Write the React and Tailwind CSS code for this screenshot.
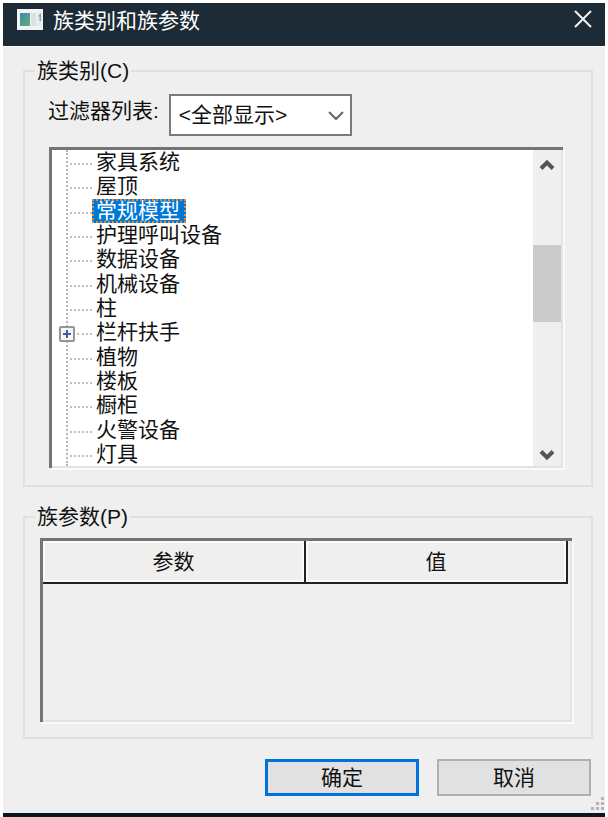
import React, { useState } from "react";

import clsx from "clsx";

const categories = [
  { label: "家具系统" },
  { label: "屋顶" },
  { label: "常规模型" },
  { label: "护理呼叫设备" },
  { label: "数据设备" },
  { label: "机械设备" },
  { label: "柱" },
  { label: "栏杆扶手", expandable: true },
  { label: "植物" },
  { label: "楼板" },
  { label: "橱柜" },
  { label: "火警设备" },
  { label: "灯具" },
];

function TitleBar() {
  return (
    <header className="flex h-11 items-start justify-between border-b border-white bg-[#1c2b36] pl-3 pr-1.5 text-white">
      <div className="flex items-center gap-2.5 pt-0.5">
        <svg width="28" height="26" viewBox="0 0 28 26" aria-hidden="true">
          <defs>
            <linearGradient id="pane" x1="0" y1="0" x2="1" y2="1">
              <stop offset="0" stopColor="#4a86ad" />
              <stop offset="1" stopColor="#5fb074" />
            </linearGradient>
          </defs>
          <rect x="2" y="1" width="26" height="21" fill="#f1f2f2" />
          <rect x="5" y="5" width="10" height="13" fill="url(#pane)" />
          <rect x="16" y="5" width="5" height="13" fill="#dcdfe2" />
          <rect x="22" y="5" width="4" height="13" fill="#e4ebee" />
          <path d="M22.5 9L26 5v8h-1.500V8z" fill="#6aa6b8" />
        </svg>
        <h1 className="text-[21px] leading-8">族类别和族参数</h1>
      </div>
      <button aria-label="关闭" className="p-1.5">
        <svg width="20" height="20" viewBox="0 0 20 20" aria-hidden="true">
          <path d="M2 2L18 18M18 2L2 18" stroke="#f1f1f1" strokeWidth="2" />
        </svg>
      </button>
    </header>
  );
}

function Group({ title, className, children }) {
  return (
    <fieldset className={clsx("min-w-0 border-2 border-[#e0e0e0]", className)}>
      <legend className="ml-2.5 px-0.5 leading-7">{title}</legend>
      {children}
    </fieldset>
  );
}

function CategoryRow({ label, expandable, selected, onSelect }) {
  return (
    <li className="flex flex-1 items-center">
      {/* connector column */}
      <div className="flex w-10 shrink-0 items-center self-stretch pt-1">
        {expandable ? (
          <button aria-label="展开" className="relative ml-[7px]">
            <svg width="16" height="16" viewBox="0 0 16 16" aria-hidden="true">
              <rect
                x="1"
                y="1"
                width="14"
                height="14"
                rx="1"
                fill="#f6f6f6"
                stroke="#969696"
                strokeWidth="2"
              />
              <path d="M8 4v8M4 8h8" stroke="#4059a8" strokeWidth="2" />
            </svg>
          </button>
        ) : (
          <span className="w-4" />
        )}
        <span className="ml-0.5 flex-1 border-t-2 border-dotted border-[#c0c0c0]" />
      </div>
      <button
        onClick={onSelect}
        className={clsx(
          "pr-1.5 pl-1 leading-6 outline-offset-[-2px]",
          selected && "bg-[#0078d7] text-white outline-2 outline-dotted outline-[#e08a3c]"
        )}
      >
        {label}
      </button>
    </li>
  );
}

function ScrollBar() {
  return (
    <div className="flex w-7 shrink-0 flex-col items-center bg-[#efefef] pt-2 pb-1">
      <button aria-label="向上滚动">
        <svg width="16" height="13" viewBox="0 0 16 13" aria-hidden="true">
          <path d="M2 10.5L8 4.5L14 10.5" fill="none" stroke="#555" strokeWidth="4" />
        </svg>
      </button>
      <div className="flex w-full flex-1 flex-col">
        <div className="grow-[74]" />
        <div className="h-[77px] bg-[#cbcbcb]" />
        <div className="grow-[127]" />
      </div>
      <button aria-label="向下滚动">
        <svg width="16" height="13" viewBox="0 0 16 13" aria-hidden="true">
          <path d="M2 2.5L8 8.5L14 2.5" fill="none" stroke="#555" strokeWidth="4" />
        </svg>
      </button>
    </div>
  );
}

function CategoryTree() {
  const [selected, setSelected] = useState("常规模型");

  return (
    <div className="mt-[11px] ml-6 mr-7 border-t-[3px] border-l-[3px] border-[#747474] bg-white shadow-[2px_2px_0_#fafafa]">
      <div className="flex h-[318px] border-r-2 border-b-2 border-[#e3e3e3]">
        <div className="relative flex flex-1">
          <span className="absolute inset-y-0 left-3.5 border-l-2 border-dotted border-[#b4b4b4]" />
          <ul className="flex flex-1 flex-col">
            {categories.map((c) => (
              <CategoryRow
                key={c.label}
                {...c}
                selected={selected === c.label}
                onSelect={() => setSelected(c.label)}
              />
            ))}
          </ul>
        </div>
        <ScrollBar />
      </div>
    </div>
  );
}

export default function App() {
  return (
    <div className="bg-white p-[3px] pb-0 font-['Liberation_Sans','Noto_Sans_CJK_SC',sans-serif] text-[21px] text-[#111]">
      <div className="border-b-4 border-[#0b1620] bg-[#efefef]">
        <TitleBar />

        <main className="relative pt-2.5 pb-[17px] pl-5 pr-3">
          <Group title="族类别(C)" className="pb-[17px]">
            <div className="flex items-center gap-2.5 pt-[9px] pl-[23px]">
              <label htmlFor="filter" className="pb-2 leading-7">
                过滤器列表:
              </label>
              <div className="relative w-[183px]">
                <select
                  id="filter"
                  className="block h-[42px] w-full appearance-none border-2 border-[#7a7a7a] bg-white px-2"
                >
                  <option>&lt;全部显示&gt;</option>
                </select>
                <svg
                  width="16"
                  height="12"
                  viewBox="0 0 16 12"
                  className="pointer-events-none absolute top-4 right-2"
                  aria-hidden="true"
                >
                  <path d="M1 2L8 9L15 2" fill="none" stroke="#666" strokeWidth="2" />
                </svg>
              </div>
            </div>
            <CategoryTree />
          </Group>

          <Group title="族参数(P)" className="mt-4 pb-[15px]">
            <div className="mt-[7px] ml-[15px] mr-[19px] border-t-[3px] border-l-[3px] border-[#747474] shadow-[2px_2px_0_#fafafa]">
              <div className="min-h-[181px] border-r-2 border-b-2 border-[#e3e3e3] bg-[#efefef] pr-0.5">
                <table className="w-full table-fixed border-collapse">
                  <thead>
                    <tr className="h-[42px] border-b-2 border-[#222]">
                      <th className="border-r-2 border-[#222] font-normal shadow-[inset_0_0_0_2px_#fafafa]">
                        参数
                      </th>
                      <th className="border-r-2 border-[#222] font-normal shadow-[inset_0_0_0_2px_#fafafa]">
                        值
                      </th>
                    </tr>
                  </thead>
                </table>
              </div>
            </div>
          </Group>

          <div className="mt-5 flex justify-end gap-[18px] pr-0.5">
            <button className="h-[37px] w-[154px] border-[3px] border-[#0072d9] bg-[#e1e1e1] leading-7">
              确定
            </button>
            <button className="h-[37px] w-[154px] border-2 border-[#b0b0b0] bg-[#e1e1e1] leading-7">
              取消
            </button>
          </div>

          {/* resize grip */}
          <svg
            width="14"
            height="14"
            viewBox="0 0 14 14"
            fill="#b5b5b5"
            className="absolute right-0 bottom-0.5"
            aria-hidden="true"
          >
            <path d="M10 0h3v3h-3zM5 5h3v3h-3zM10 5h3v3h-3zM0 10h3v3h-3zM5 10h3v3h-3zM10 10h3v3h-3z" />
          </svg>
        </main>
      </div>
    </div>
  );
}
